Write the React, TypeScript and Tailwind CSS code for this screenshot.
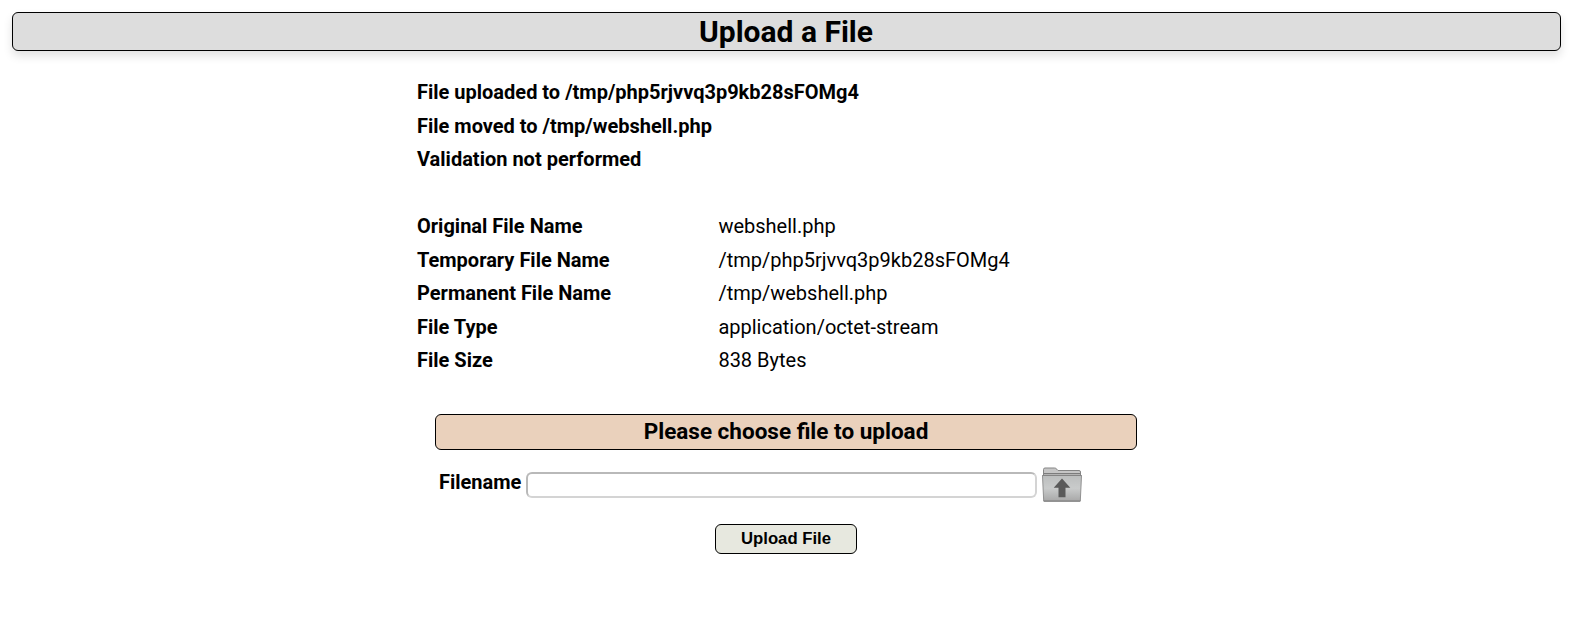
const messages = ["File uploaded to /tmp/php5rjvvq3p9kb28sFOMg4", "File moved to /tmp/webshell.php", "Validation not performed"];
const details = [
  ["Original File Name", "webshell.php"],
  ["Temporary File Name", "/tmp/php5rjvvq3p9kb28sFOMg4"],
  ["Permanent File Name", "/tmp/webshell.php"],
  ["File Type", "application/octet-stream"],
  ["File Size", "838 Bytes"],
];

function FolderIcon() {
  return (
    <svg width="41" height="36" viewBox="0 0 41 36" className="block">
      <defs>
        <linearGradient id="folder" x1="0" y1="0" x2="0" y2="1">
          <stop offset="0" stopColor="#bcbebe" />
          <stop offset="0.5" stopColor="#c9cbcb" />
          <stop offset="1" stopColor="#a8a8a8" />
        </linearGradient>
      </defs>
      <path d="M1.5 10V2.5Q1.5 1 3 1H12.5Q14 1 14.8 2.2L16 3.5H37Q38.5 3.5 38.5 5V10Z" fill="#c6c6c6" stroke="#858585" />
      <path d="M2 6.7H38" stroke="#6c6c6c" />
      <path d="M0.5 8.5H39.5L38.3 34H1.7Z" fill="url(#folder)" stroke="#919191" />
      <path d="M0.5 8.5H39.5" stroke="#858585" />
      <path d="M1.7 34.2H38.3" stroke="#7c7c7c" />
      <path d="M20 11.5L28.3 20.8H23.5V30.3H16.5V20.8H11.7Z" fill="#5a5a5a" />
    </svg>
  );
}

export default function App() {
  return (
    <main className="h-[617px] bg-white pt-3 pl-3 pr-2 font-['Roboto',sans-serif] text-black">
      <h1 className="flex h-[39px] items-center justify-center rounded-[6px] border border-black bg-[#dddddd] pt-px pr-px text-[30px] leading-none font-bold shadow-[0_5px_10px_rgba(0,0,0,0.12)]">Upload a File</h1>
      <section className="ml-[405px] mt-[25px] text-[20px] leading-[33.5px]">
        <div className="font-bold">
          {messages.map((m) => <p key={m}>{m}</p>)}
        </div>
        <dl className="mt-[33.5px]">
          {details.map(([k, v]) => (
            <div key={k} className="flex">
              <dt className="w-[301.4px] font-bold">{k}</dt>
              <dd>{v}</dd>
            </div>
          ))}
        </dl>
      </section>
      <form className="ml-[423px] mt-[36px] w-[702px]">
        <h2 className="flex h-9 items-center justify-center rounded-[6px] border border-black bg-[#ead1bc] text-[22.5px] leading-none font-bold">Please choose file to upload</h2>
        <div className="mt-[17px] flex h-9 pl-1">
          <label htmlFor="filename" className="w-[87px] text-[20px] leading-[31px] font-bold">Filename</label>
          <input id="filename" className="mt-[5px] h-[26px] w-[511px] rounded-[6px] border-2 border-t-[#b9b9b9] border-r-[#d4d4d4] border-b-[#d4d4d4] border-l-[#b9b9b9]" />
          <button type="button" aria-label="Choose file" className="ml-[5px]"><FolderIcon /></button>
        </div>
        <button type="button" className="mx-auto mt-[21px] block h-[30px] w-[142px] rounded-[6px] border border-black bg-[#e7e8df] pt-px font-['Liberation_Sans',sans-serif] text-[16.7px] leading-none font-bold">Upload File</button>
      </form>
    </main>
  );
}
